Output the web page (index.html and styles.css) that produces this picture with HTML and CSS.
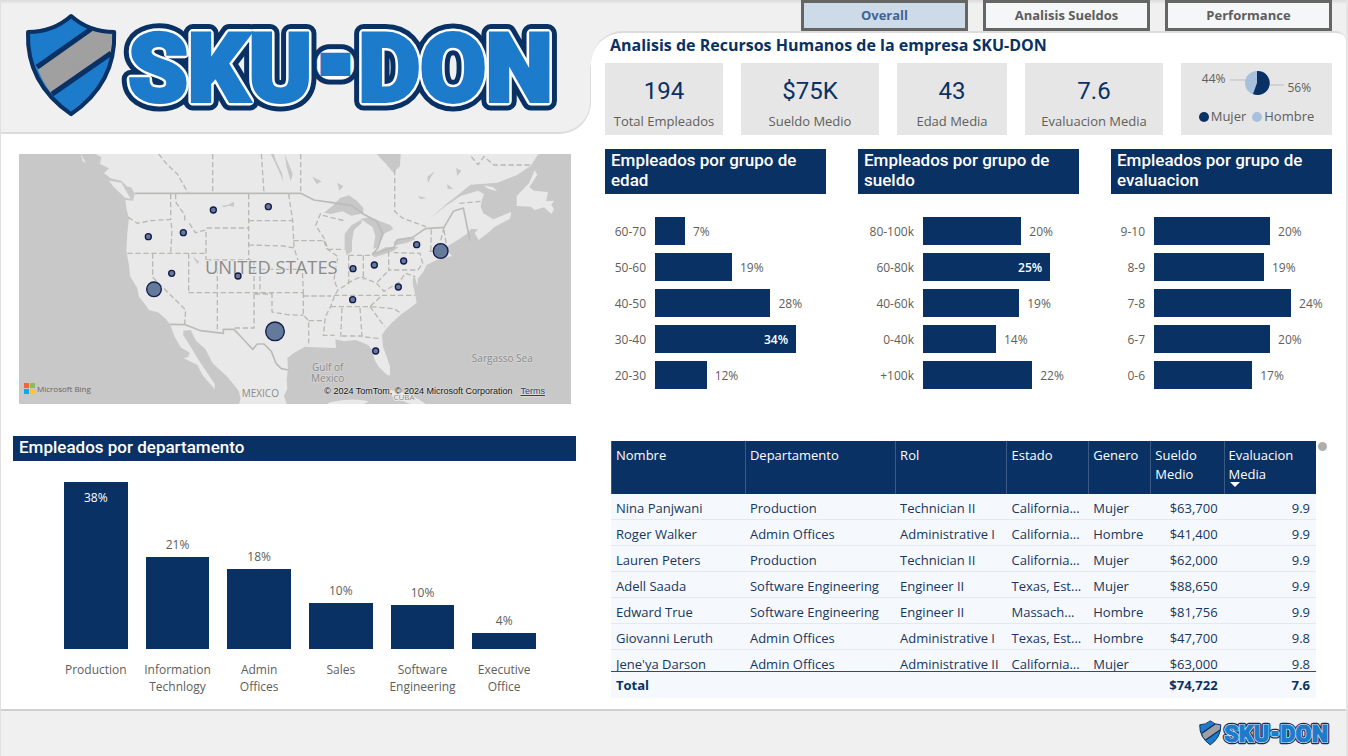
FILE: index.html
```html
<!DOCTYPE html>
<html lang="es">
<head>
<meta charset="utf-8">
<meta name="viewport" content="width=device-width, initial-scale=1">
<title>SKU-DON - Recursos Humanos</title>
<link rel="stylesheet" href="styles.css">
</head>
<body>
<div class="report">
  <main class="board">
    <section class="left">
      <header class="brand">
        <svg class="logo" viewBox="25 13 535 105" role="img" aria-label="SKU-DON">
          <g id="shield">
            <path d="M71 16Q89 32 114 32Q116 83 71 114Q26 83 28 32Q53 32 71 16Z" fill="#1c7bca"/>
            <path d="M91 30L114 32Q114 42 111 52L51 93Q42 82 37 67Z" fill="#a0a0a0"/>
            <path d="M91 29L37 67M111 53L52 94" stroke="#0a3163" stroke-width="5"/>
            <path d="M71 16Q89 32 114 32Q116 83 71 114Q26 83 28 32Q53 32 71 16Z" fill="none" stroke="#0a3163" stroke-width="4" stroke-linejoin="round"/>
          </g>
          <g id="wordmark" class="wordmark">
            <g class="edge-navy"><text x="128" y="101">SKU</text><text class="dash" x="335" y="77">-</text><text x="358" y="101">DON</text></g>
            <g class="edge-white"><text x="128" y="101">SKU</text><text class="dash" x="335" y="77">-</text><text x="358" y="101">DON</text></g>
            <g class="face"><text x="128" y="101">SKU</text><text class="dash" x="335" y="77">-</text><text x="358" y="101">DON</text></g>
          </g>
        </svg>
      </header>

      <div class="map">
        <svg class="map-art" viewBox="15 12 1656 750" aria-hidden="true">
          <rect x="15" y="12" width="1656" height="750" fill="#c8c8c8"/>
          <g fill="#e9e9e9">
            <path d="M245 12L262 22L258 42L285 55L270 70L290 85L322 92L340 110L352 112L362 132L357 152L334 150L338 180L345 205L340 250L337 303L345 345L348 378L370 415L375 440L395 465L405 480L432 487L455 506L468 523L482 560L500 592L527 608L522 622L508 624L550 645L566 676L602 718L602 702L570 654L550 624L530 590L508 556L508 542L530 540L546 572L574 597L596 640L640 680L674 722L680 746L675 762L818 762L810 738L820 716L818 690L822 655L820 625L838 610L873 590L896 592L966 594L964 568L990 574L1024 570L1040 575L1063 586L1074 600L1082 630L1094 650L1120 676L1128 676L1128 650L1118 620L1107 590L1104 555L1114 540L1132 520L1160 494L1180 480L1193 470L1208 458L1203 430L1197 405L1196 385L1202 378L1210 408L1212 385L1228 365L1238 345L1268 330L1298 322L1314 318L1306 308L1293 302L1298 290L1328 272L1358 252L1372 236L1390 238L1405 226L1438 208L1408 190L1400 170L1404 150L1410 132L1392 122L1340 138L1292 170L1245 208L1300 160L1340 128L1370 104L1450 98L1508 76L1550 47L1573 12Z"/>
            <path d="M1382 250L1400 226L1438 208L1492 186L1488 206L1440 232L1428 244L1394 270Z"/>
            <path d="M1562 60L1545 100L1508 138L1508 168L1550 170L1562 180L1590 172L1612 192L1620 178L1612 164L1620 152L1596 154L1602 126L1560 122L1546 112L1570 74Z"/>
            <path d="M1410 106L1438 112L1450 124L1422 116ZM285 92L322 98L350 146L334 144L300 112Z"/>
            <path d="M948 757Q1010 742 1065 754L1050 762H940ZM1120 720Q1170 722 1214 748L1235 762H1190Q1150 748 1130 736Z"/>
            <path d="M1150 632L1165 636M200 12L216 40L206 34Z"/>
          </g>
          <g fill="#c8c8c8">
            <path d="M930 188L958 166L978 144L1005 136L1030 154L1048 174L1048 190L1012 197L985 184L950 192Z"/>
            <path d="M992 252L1012 226L1044 208L1042 220L1020 240L1014 274L1014 304L998 316L992 290Z"/>
            <path d="M1040 206L1068 202L1095 212L1130 226L1138 238L1112 250L1106 262L1092 292L1078 296L1084 258L1076 232Z"/>
            <path d="M1072 314L1114 292L1154 290L1138 304L1082 322Z"/>
            <path d="M1138 278L1150 266L1196 262L1204 268L1180 278L1144 286Z"/>
            <path d="M1088 12L1160 12L1158 48L1138 68L1118 44ZM770 12L784 40L808 94L804 70L785 30L780 12ZM812 12L836 72L830 94L818 52ZM895 80L923 94L908 102ZM970 98L988 108L976 122ZM1240 80L1262 64L1250 82L1242 100ZM1212 138L1238 144L1220 148ZM1300 102L1318 118L1300 116ZM1326 54L1342 62L1330 78ZM622 168L642 164L660 155L660 170L644 167L630 172ZM536 318L556 336L550 342Z"/>
          </g>
          <g class="nation">
            <path d="M362 130H860L900 150L955 158L1012 166L1048 192L1088 214L1106 250L1092 294L1076 312L1140 292L1150 270L1196 262L1234 236L1290 232L1318 184L1348 174L1360 232L1368 272"/>
            <path d="M468 523L514 524L560 542L628 550V538H660L690 570L716 598L730 582H750L772 604L786 640L802 656L824 660"/>
          </g>
          <g class="state">
            <path d="M434 12L460 44L490 72L522 128M596 12V128M742 12L750 128M860 12V128M1142 60V184L1165 204L1236 230M1372 20L1392 44L1410 20L1440 45H1550"/>
            <path d="M343 202L370 220L410 212L470 208L474 240L470 308M340 310H576M485 132V156L512 195V216M526 220L544 248L576 240V330M704 132V330M578 234H704M470 132V208M416 310V382L515 480L512 522M524 310V428M576 330H720V428M610 330V548M524 428H868M738 330V428M704 212H836M824 132L836 212L840 290M704 285L808 288L840 294L852 330M838 272H930M738 358H862M722 432H774V486L820 494L868 496M720 432V534H656"/>
            <path d="M930 272L938 296L972 320L966 350L960 390L972 420L962 436L950 470L934 500L928 556H962M868 428V496L884 512V580M868 438H952M884 512H930M850 360H865L868 428M920 190L905 226L930 264L942 298H992M926 196L990 212M1004 316V400L972 420M1048 316V390M1004 316H1072M1124 304V360H1212L1226 340L1218 310L1140 308M960 436H1204M950 470H1068L1100 440M984 474L980 560M1038 474L1044 560L1100 566M984 558H1044M1068 470L1112 530M1072 470L1140 476L1164 492M1090 396L1126 360M1000 400L1040 380L1088 400L1110 424L1156 396L1174 370L1204 380M1252 238L1250 310M1290 232L1272 304M1290 240L1298 290M1246 304H1294M1336 160L1402 154"/>
          </g>
          <g class="map-label">
            <text class="country" x="772" y="373">UNITED STATES</text>
            <text class="neighbour" x="739" y="740">MEXICO</text>
            <text class="sea" x="941" y="662">Gulf of</text>
            <text class="sea" x="941" y="697">Mexico</text>
            <text class="sea" x="1465" y="636">Sargasso Sea</text>
            <text class="island" x="1170" y="749">CUBA</text>
          </g>
          <g class="bubbles">
            <circle cx="598" cy="180" r="9"/><circle cx="763" cy="170" r="9"/><circle cx="403" cy="260" r="9"/><circle cx="508" cy="248" r="9"/><circle cx="473" cy="370" r="9"/><circle cx="672" cy="378" r="9"/><circle cx="1208" cy="284" r="9"/><circle cx="1169" cy="333" r="9"/><circle cx="1081" cy="345" r="9"/><circle cx="1017" cy="356" r="9"/><circle cx="1153" cy="411" r="9"/><circle cx="1016" cy="449" r="9"/><circle cx="1085" cy="603" r="9"/><circle cx="420" cy="418" r="22"/><circle cx="1280" cy="303" r="22"/><circle cx="783" cy="544" r="28"/>
          </g>
        </svg>
        <div class="bing">
          <svg class="bing-icon" viewBox="0 0 11 11" aria-hidden="true"><path d="M0 0h5v5H0z" fill="#f1673a"/><path d="M6 0h5v5H6z" fill="#8cc04b"/><path d="M0 6h5v5H0z" fill="#1ba3e8"/><path d="M6 6h5v5H6z" fill="#fdc33a"/></svg>
          <span>Microsoft Bing</span>
        </div>
        <div class="credits"><span>© 2024 TomTom, © 2024 Microsoft Corporation</span><a href="#terms">Terms</a></div>
      </div>

      <section class="departments">
        <h2 class="bar-title">Empleados por departamento</h2>
        <div class="columns">
          <div class="column inside"><div class="column-bar" style="height:167px"><span>38%</span></div></div>
          <div class="column"><span>21%</span><div class="column-bar" style="height:92px"></div></div>
          <div class="column"><span>18%</span><div class="column-bar" style="height:80px"></div></div>
          <div class="column"><span>10%</span><div class="column-bar" style="height:46px"></div></div>
          <div class="column"><span>10%</span><div class="column-bar" style="height:44px"></div></div>
          <div class="column"><span>4%</span><div class="column-bar" style="height:16px"></div></div>
        </div>
        <div class="categories">
          <span>Production</span><span>Information<br>Technlogy</span><span>Admin<br>Offices</span><span>Sales</span><span>Software<br>Engineering</span><span>Executive<br>Office</span>
        </div>
      </section>
    </section>

    <section class="right">
      <nav class="tabs">
        <button class="tab active" type="button">Overall</button>
        <button class="tab" type="button">Analisis Sueldos</button>
        <button class="tab" type="button">Performance</button>
      </nav>
      <div class="panel">
        <h1 class="title">Analisis de Recursos Humanos de la empresa SKU-DON</h1>
        <div class="kpis">
          <div class="kpi"><strong>194</strong><span>Total Empleados</span></div>
          <div class="kpi"><strong>$75K</strong><span>Sueldo Medio</span></div>
          <div class="kpi"><strong>43</strong><span>Edad Media</span></div>
          <div class="kpi"><strong>7.6</strong><span>Evaluacion Media</span></div>
          <div class="kpi gender">
            <div class="pie-row">
              <span>44%</span>
              <svg class="pie" viewBox="0 0 54 26" aria-hidden="true">
                <path d="M0 10H16M38 15H54" stroke="#bdbdbd" stroke-width="1"/>
                <circle cx="27" cy="13" r="12" fill="#a7c1dd"/>
                <path d="M27 13V1A12 12 0 1 1 23 24Z" fill="#0a3163"/>
              </svg>
              <span class="low">56%</span>
            </div>
            <div class="legend"><i class="dot women"></i><span>Mujer</span><i class="dot men"></i><span>Hombre</span></div>
          </div>
        </div>

        <div class="groups">
          <section class="group">
            <h2 class="bar-title">Empleados por grupo de edad</h2>
            <div class="rows ages">
              <span class="name">60-70</span><div class="track"><div class="bar" style="width:17.5%"></div><span>7%</span></div>
              <span class="name">50-60</span><div class="track"><div class="bar" style="width:45%"></div><span>19%</span></div>
              <span class="name">40-50</span><div class="track"><div class="bar" style="width:67.5%"></div><span>28%</span></div>
              <span class="name">30-40</span><div class="track"><div class="bar" style="width:82.5%"><b>34%</b></div></div>
              <span class="name">20-30</span><div class="track"><div class="bar" style="width:30.2%"></div><span>12%</span></div>
            </div>
          </section>
          <section class="group">
            <h2 class="bar-title">Empleados por grupo de sueldo</h2>
            <div class="rows salaries">
              <span class="name">80-100k</span><div class="track"><div class="bar" style="width:63%"></div><span>20%</span></div>
              <span class="name">60-80k</span><div class="track"><div class="bar" style="width:81.5%"><b>25%</b></div></div>
              <span class="name">40-60k</span><div class="track"><div class="bar" style="width:61.7%"></div><span>19%</span></div>
              <span class="name">0-40k</span><div class="track"><div class="bar" style="width:46.8%"></div><span>14%</span></div>
              <span class="name">+100k</span><div class="track"><div class="bar" style="width:70%"></div><span>22%</span></div>
            </div>
          </section>
          <section class="group">
            <h2 class="bar-title">Empleados por grupo de evaluacion</h2>
            <div class="rows scores">
              <span class="name">9-10</span><div class="track"><div class="bar" style="width:65.2%"></div><span>20%</span></div>
              <span class="name">8-9</span><div class="track"><div class="bar" style="width:61.8%"></div><span>19%</span></div>
              <span class="name">7-8</span><div class="track"><div class="bar" style="width:77%"></div><span>24%</span></div>
              <span class="name">6-7</span><div class="track"><div class="bar" style="width:65.2%"></div><span>20%</span></div>
              <span class="name">0-6</span><div class="track"><div class="bar" style="width:55.2%"></div><span>17%</span></div>
            </div>
          </section>
        </div>

        <div class="staff">
          <div class="staff-scroll">
            <table>
              <colgroup><col class="c-name"><col class="c-dept"><col class="c-role"><col class="c-state"><col class="c-gender"><col class="c-pay"><col class="c-score"></colgroup>
              <thead><tr><th>Nombre</th><th>Departamento</th><th>Rol</th><th>Estado</th><th>Genero</th><th>Sueldo Medio</th><th class="sorted">Evaluacion Media</th></tr></thead>
              <tbody>
                <tr><td>Nina Panjwani</td><td>Production</td><td>Technician II</td><td>California...</td><td>Mujer</td><td>$63,700</td><td>9.9</td></tr>
                <tr><td>Roger Walker</td><td>Admin Offices</td><td>Administrative I</td><td>California...</td><td>Hombre</td><td>$41,400</td><td>9.9</td></tr>
                <tr><td>Lauren Peters</td><td>Production</td><td>Technician II</td><td>California...</td><td>Mujer</td><td>$62,000</td><td>9.9</td></tr>
                <tr><td>Adell Saada</td><td>Software Engineering</td><td>Engineer II</td><td>Texas, Est...</td><td>Mujer</td><td>$88,650</td><td>9.9</td></tr>
                <tr><td>Edward True</td><td>Software Engineering</td><td>Engineer II</td><td>Massach...</td><td>Hombre</td><td>$81,756</td><td>9.9</td></tr>
                <tr><td>Giovanni Leruth</td><td>Admin Offices</td><td>Administrative I</td><td>Texas, Est...</td><td>Hombre</td><td>$47,700</td><td>9.8</td></tr>
                <tr><td>Jene'ya Darson</td><td>Admin Offices</td><td>Administrative II</td><td>California...</td><td>Mujer</td><td>$63,000</td><td>9.8</td></tr>
              </tbody>
              <tfoot><tr><td>Total</td><td></td><td></td><td></td><td></td><td>$74,722</td><td>7.6</td></tr></tfoot>
            </table>
          </div>
          <i class="thumb"></i>
        </div>
      </div>
    </section>
  </main>
  <footer class="footer">
    <svg class="logo-small" viewBox="25 13 535 105" role="img" aria-label="SKU-DON"><use href="#shield"/><use href="#wordmark"/></svg>
  </footer>
</div>
</body>
</html>
```

FILE: styles.css
```css
:root {
  --navy: #0a3163;
  --ink: #605e5c;
  --shell: #f0f0f0;
  --card: #e6e6e6;
  --line: #dcdcdc;
  --ui: "Open Sans", "Noto Sans", sans-serif;
  --din: Roboto, "Liberation Sans", sans-serif;
}

* { box-sizing: border-box; }

body {
  margin: 0;
  font: 13px/17px var(--ui);
  color: var(--ink);
  background: #fff;
}

h1, h2 { margin: 0; }

.report {
  display: flex;
  flex-direction: column;
  min-height: 100vh;
  border-left: 1px solid #e0e0e0;
  border-right: 2px solid #e4e4e4;
}

.board {
  flex: 1;
  display: grid;
  grid-template-columns: 590fr 755fr;
}

/* brand */
.left { display: flex; flex-direction: column; }

.brand {
  position: relative;
  height: 134px;
  padding: 13px 30px 12px 24px;
  background: linear-gradient(#dadada, var(--shell) 4px);
  border-bottom-right-radius: 32px;
}

.brand::after {
  content: "";
  position: absolute;
  inset: 66px 0 0 0;
  border-bottom: 2px solid var(--line);
  border-right: 1px solid var(--line);
  border-bottom-right-radius: 32px;
}

.logo { display: block; width: 100%; overflow: visible; }

.wordmark { font: 900 95px Roboto, sans-serif; stroke-linejoin: round; }
.wordmark .dash { font-size: 40px; text-anchor: middle; }
.edge-navy { fill: #0a3163; stroke: #0a3163; stroke-width: 19px; }
.edge-white { fill: #fff; stroke: #fff; stroke-width: 9px; }
.face { fill: #1c7bca; stroke: #1c7bca; stroke-width: 4px; stroke-linejoin: miter; }
.edge-navy .dash { stroke-width: 35px; }
.edge-white .dash { stroke-width: 25px; }
.face .dash { stroke-width: 18px; }

/* map */
.map {
  position: relative;
  margin: 20px 20px 0 18px;
}

.map-art { display: block; width: 100%; }
.nation path { fill: none; stroke: #bdbbb9; stroke-width: 5; stroke-linejoin: round; }
.state path { fill: none; stroke: #bab8b3; stroke-width: 4; stroke-dasharray: 16 8; }

.map-label text {
  font-family: var(--ui);
  text-anchor: middle;
  fill: #8b8b8b;
  paint-order: stroke;
  stroke: #e9e9e9;
  stroke-width: 6px;
}
.map-label .country { font-size: 55px; }
.map-label .neighbour { font-size: 30px; }
.map-label .sea { font-size: 30px; stroke: #d2d2d2; }
.map-label .island { font-size: 24px; }

.bubbles circle { fill: #647a9b; stroke: #14194a; stroke-width: 4; }

.bing {
  position: absolute;
  left: 5px;
  bottom: 7px;
  display: flex;
  align-items: center;
  gap: 2px;
  font-size: 8px;
  color: #666;
}
.bing-icon { width: 11px; height: 11px; }

.credits {
  position: absolute;
  right: 26px;
  bottom: 5px;
  display: flex;
  gap: 8px;
  font: 9px/16px "Liberation Sans", sans-serif;
  color: #111;
  white-space: nowrap;
  text-shadow: 0 0 2px #fff;
}
.credits a { color: #2b3a84; }

/* chart titles */
.bar-title {
  padding: 1px 6px 4px;
  background: var(--navy);
  color: #fff;
  font: 500 17px/20px var(--din);
}

/* department columns */
.departments { margin: 32px 15px 0 12px; }

.columns, .categories {
  display: grid;
  grid-template-columns: repeat(6, 1fr);
  margin: 0 31px 0 42px;
  font-size: 12px;
  text-align: center;
}

.columns { height: 188px; }

.column {
  display: flex;
  flex-direction: column;
  justify-content: flex-end;
  gap: 4px;
  padding: 0 9px;
}
.column-bar { background: var(--navy); }
.column.inside { color: #fff; }
.inside .column-bar { padding-top: 7px; }
.categories { margin-top: 12px; }

/* tabs */
.right {
  display: flex;
  flex-direction: column;
  background: linear-gradient(#dadada, var(--shell) 4px);
}

.tabs {
  display: grid;
  grid-template-columns: repeat(3, 167px);
  justify-content: end;
  gap: 15px;
  height: 31px;
  padding-right: 14px;
}

.tab {
  border: 3px solid #656563;
  background: #f4f6f8;
  color: #5d5d5d;
  font: 700 13px/17px var(--ui);
}
.tab.active { background: #cddbe8; color: #3f6596; }

/* panel */
.panel {
  position: relative;
  flex: 1;
  padding: 2px 14px 0 14px;
  background: #fff;
  border-top: 2px solid var(--line);
  border-top-left-radius: 32px;
  border-top-right-radius: 10px;
}

.title {
  padding-left: 5px;
  color: var(--navy);
  font: 700 16px/20px var(--ui);
}

.kpis {
  display: grid;
  grid-template-columns: 118fr 138fr 110fr 138fr 151fr;
  gap: 18px;
  height: 72px;
  margin-top: 8px;
}

.kpi {
  display: flex;
  flex-direction: column;
  align-items: center;
  gap: 8px;
  padding-top: 14px;
  background: var(--card);
  white-space: nowrap;
}
.kpi strong { color: var(--navy); font: 400 24px/28px var(--din); }

.gender { gap: 12px; padding-top: 7px; }
.pie-row { display: flex; gap: 4px; align-items: flex-start; font-size: 12px; }
.pie-row .low { align-self: flex-end; }
.pie { width: 54px; height: 26px; }
.legend { display: flex; align-items: center; gap: 2px; }
.dot { width: 10px; height: 10px; border-radius: 50%; }
.women { background: var(--navy); }
.men { margin-left: 4px; background: #a7c1dd; }

.groups {
  display: grid;
  grid-template-columns: repeat(3, 1fr);
  gap: 32px;
  margin-top: 14px;
}

.rows {
  display: grid;
  grid-auto-rows: 28px;
  align-items: center;
  row-gap: 8px;
  column-gap: 9px;
  margin-top: 23px;
  font-size: 12px;
}
.ages { grid-template-columns: 41px 1fr; }
.salaries { grid-template-columns: 56px 1fr; }
.scores { grid-template-columns: 34px 1fr; }
.name { text-align: right; }
.track { display: flex; align-items: center; gap: 8px; height: 28px; }
.bar {
  display: flex;
  align-items: center;
  justify-content: flex-end;
  height: 28px;
  padding-right: 8px;
  background: var(--navy);
  color: #fff;
}
.bar b { font-weight: 600; }

/* staff table */
.staff {
  display: flex;
  gap: 2px;
  margin: 52px 5px 11px 6px;
}
.staff-scroll { flex: 1; max-height: 257px; overflow: hidden; }

table {
  width: 100%;
  table-layout: fixed;
  border-collapse: separate;
  border-spacing: 0;
  color: #16365f;
}
.c-name { width: 19%; }
.c-dept { width: 21.3%; }
.c-role { width: 15.8%; }
.c-state { width: 11.6%; }
.c-gender { width: 8.8%; }
.c-pay { width: 10.4%; }
.c-score { width: 13.1%; }

th {
  height: 53px;
  padding: 5px 4px 0 4px;
  border-left: 1px solid #3b5a83;
  background: var(--navy);
  color: #fff;
  font-weight: 400;
  line-height: 19px;
  text-align: left;
  vertical-align: top;
}
.sorted { position: relative; }
.sorted::after {
  content: "";
  position: absolute;
  left: 5px;
  bottom: 7px;
  border: 5px solid transparent;
  border-top-color: #fff;
  border-bottom: 0;
}
td {
  height: 26px;
  padding: 3px 6px 0 5px;
  background: #f5f9fe;
  border-bottom: 1px solid #e4e9ef;
  white-space: nowrap;
}
td:nth-child(n+6) { text-align: right; }
tfoot td {
  position: sticky;
  bottom: 0;
  height: 27px;
  padding-top: 0;
  border-top: 1px solid #2b4c78;
  border-bottom: 0;
  color: var(--navy);
  font-weight: 700;
}
.thumb {
  width: 9px;
  height: 9px;
  margin-top: 1px;
  border-radius: 50%;
  background: #b0aeac;
}

/* footer */
.footer {
  display: flex;
  justify-content: flex-end;
  height: 47px;
  padding: 9px 16px 0;
  background: var(--shell);
  border-top: 2px solid #d0d0d0;
}
.logo-small { width: 131px; height: 26px; overflow: visible; }
```
